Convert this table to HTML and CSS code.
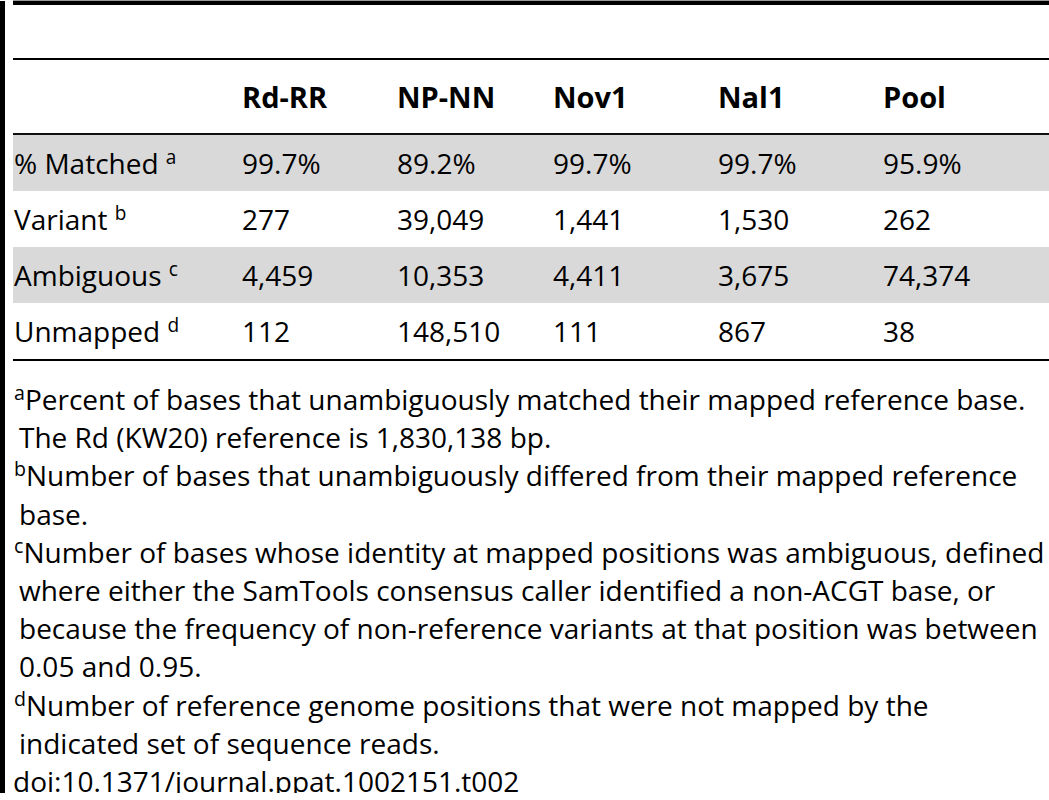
FILE: index.html
```html
<!DOCTYPE html>
<html lang="en">
<head>
<meta charset="utf-8">
<title>Table 2</title>
<link rel="stylesheet" href="styles.css">
</head>
<body>
<div class="page">
  <div class="caption-space"></div>
  <table class="data">
    <colgroup>
      <col class="c-label">
      <col class="c-a">
      <col class="c-b">
      <col class="c-c">
      <col class="c-d">
      <col class="c-e">
    </colgroup>
    <thead>
      <tr>
        <th></th>
        <th>Rd-RR</th>
        <th>NP-NN</th>
        <th>Nov1</th>
        <th>Nal1</th>
        <th>Pool</th>
      </tr>
    </thead>
    <tbody>
      <tr class="shade">
        <td>% Matched <sup>a</sup></td>
        <td>99.7%</td>
        <td>89.2%</td>
        <td>99.7%</td>
        <td>99.7%</td>
        <td>95.9%</td>
      </tr>
      <tr>
        <td>Variant <sup>b</sup></td>
        <td>277</td>
        <td>39,049</td>
        <td>1,441</td>
        <td>1,530</td>
        <td>262</td>
      </tr>
      <tr class="shade">
        <td>Ambiguous <sup>c</sup></td>
        <td>4,459</td>
        <td>10,353</td>
        <td>4,411</td>
        <td>3,675</td>
        <td>74,374</td>
      </tr>
      <tr>
        <td>Unmapped <sup>d</sup></td>
        <td>112</td>
        <td>148,510</td>
        <td>111</td>
        <td>867</td>
        <td>38</td>
      </tr>
    </tbody>
  </table>
  <div class="notes">
    <p class="note"><sup>a</sup>Percent of bases that unambiguously matched their mapped reference base.<br>The Rd (KW20) reference is 1,830,138 bp.</p>
    <p class="note"><sup>b</sup>Number of bases that unambiguously differed from their mapped reference<br>base.</p>
    <p class="note"><sup>c</sup>Number of bases whose identity at mapped positions was ambiguous, defined<br>where either the SamTools consensus caller identified a non-ACGT base, or<br>because the frequency of non-reference variants at that position was between<br>0.05 and 0.95.</p>
    <p class="note"><sup>d</sup>Number of reference genome positions that were not mapped by the<br>indicated set of sequence reads.</p>
    <p class="doi">doi:10.1371/journal.ppat.1002151.t002</p>
  </div>
</div>
</body>
</html>
```

FILE: styles.css
```css
html, body {
  margin: 0;
  padding: 0;
  background: #fff;
  overflow: hidden;
}

body {
  font-family: "Open Sans", "Noto Sans", sans-serif;
  color: #000;
}

.page {
  box-sizing: border-box;
  height: 792px;
  border-left: 5px solid #000;
  padding-left: 8px;
}

.caption-space {
  margin-top: 1px;
  height: 53px;
  border-top: 4px solid #000;
  border-bottom: 2px solid #000;
  box-shadow: 0 -1px 0 #9a9a9a;
}

.data {
  width: 1036px;
  table-layout: fixed;
  border-collapse: collapse;
  font-size: 28px;
}

.c-label { width: 229px; }
.c-a { width: 155px; }
.c-b { width: 156px; }
.c-c { width: 165px; }
.c-d { width: 165px; }
.c-e { width: 166px; }

.data th,
.data td {
  padding: 0;
  text-align: left;
  vertical-align: middle;
  white-space: nowrap;
}

.data th:first-child,
.data td:first-child {
  padding-left: 1px;
}

.data thead th {
  height: 73px;
  font-size: 29px;
  font-weight: 700;
  border-bottom: 2px solid #111;
}

.data tbody td {
  height: 56px;
}

.data tbody tr:last-child td {
  border-bottom: 2px solid #000;
}

.shade td {
  background: #d9d9d9;
}

.data sup {
  font-size: 0.68em;
  line-height: 0;
  vertical-align: 0.55em;
}

.notes {
  padding-top: 19px;
  font-size: 28px;
  line-height: 38.2px;
}

.note {
  margin: 0 0 0 6px;
  text-indent: -5px;
  white-space: nowrap;
}

.note sup {
  font-size: 0.7em;
  line-height: 0;
  vertical-align: 0.5em;
}

.doi {
  margin: 0;
  white-space: nowrap;
}
```
